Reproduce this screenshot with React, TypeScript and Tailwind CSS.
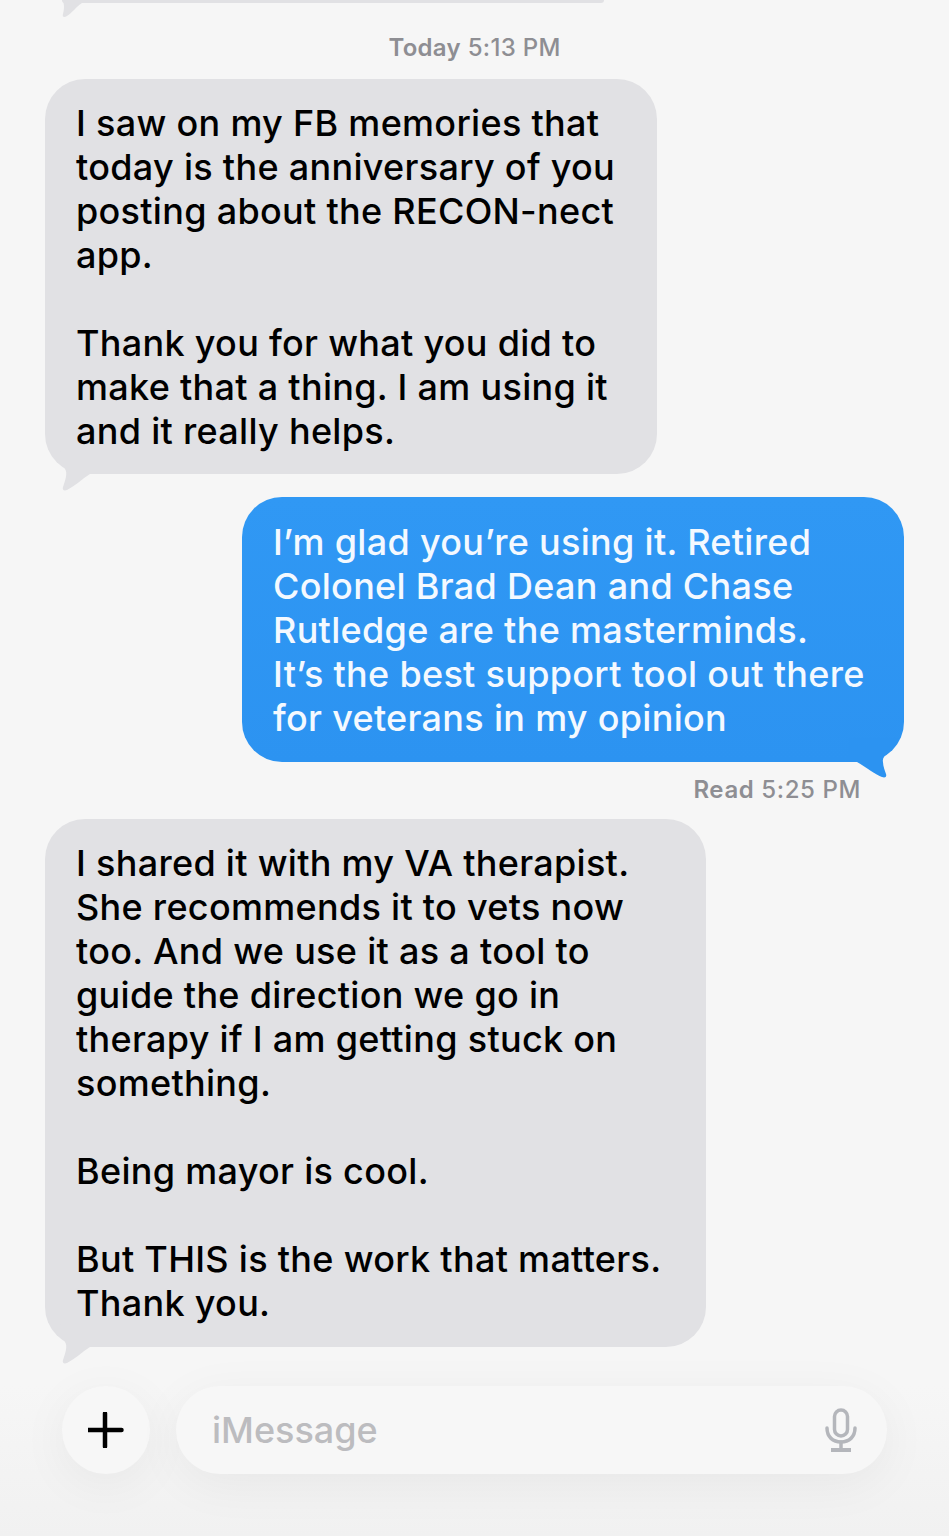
import React from "react";

const font = { fontFamily: "Inter, 'Liberation Sans', sans-serif" };

function TailLeft() {
  return (
    <svg
      className="absolute left-[15px] bottom-[-17px]"
      width="50"
      height="41"
      viewBox="0 0 50 41"
      fill="#e1e1e4"
    >
      <path d="M0 0 C1 8 1 14 5 19 C8 23 5 31 3 37 C2 40 4 41 7 40 C15 36 22 29 30 24 L50 24 L50 0 Z" />
    </svg>
  );
}

function TailRight() {
  return (
    <svg
      className="absolute right-[5px] bottom-[-16px]"
      width="50"
      height="40"
      viewBox="0 0 50 40"
      fill="#2c93f1"
    >
      <path d="M50 0 C48 6 44 10 40 14 C36 17 33 20 34 24 C34 28 36 33 37 36 C38 39 36 40 33 39 C27 37 17 29 8 24 L0 24 L0 0 Z" />
    </svg>
  );
}

function Incoming({ className, children }: { className: string; children: React.ReactNode }) {
  return (
    <div className={`relative ml-[45px] rounded-[40px] bg-[#e1e1e4] pl-[31px] pt-[22px] text-[36px] font-medium leading-[44px] tracking-[0.3px] text-black whitespace-nowrap ${className}`}>
      {children}
      <TailLeft />
    </div>
  );
}

export default function App() {
  return (
    <div className="flex h-[1536px] w-[949px] flex-col overflow-hidden bg-[#f6f6f6]" style={font}>
      <div className="flex-1">
        {/* end of the previous bubble, cut off by the top of the screen */}
        <div className="relative ml-[62px] h-[3px] w-[542px] rounded-b-[3px] bg-[#e1e1e4]">
          <svg className="absolute left-0 top-0" width="30" height="18" viewBox="0 0 30 18" fill="#e1e1e4">
            <path d="M0 0 C3 4 2 10 1 14 C0 17 2 18 5 16 C10 13 14 7 20 3 L30 3 L30 0 Z" />
          </svg>
        </div>

        <p className="mt-[31px] text-center text-[24px] font-medium leading-[28px] tracking-[0.3px] text-[#8e8e93]">
          <span className="font-semibold">Today</span> 5:13 PM
        </p>

        <div className="mt-[17px]">
          <Incoming className="w-[612px] pb-[21px]">
            I saw on my FB memories that
            <br />
            today is the anniversary of you
            <br />
            posting about the RECON-nect
            <br />
            app.
            <br />
            <br />
            Thank you for what you did to
            <br />
            make that a thing. I am using it
            <br />
            and it really helps.
          </Incoming>
        </div>

        <div className="relative ml-[242px] mt-[23px] w-[662px] rounded-[40px] bg-gradient-to-b from-[#3098f4] to-[#2c93f1] pb-[22px] pl-[31px] pt-[23px] text-[36px] font-medium leading-[44px] tracking-[0.3px] whitespace-nowrap text-[#f4f9ff]">
          I’m glad you’re using it. Retired
          <br />
          Colonel Brad Dean and Chase
          <br />
          Rutledge are the masterminds.
          <br />
          It’s the best support tool out there
          <br />
          for veterans in my opinion
          <TailRight />
        </div>

        <p className="mr-[88px] mt-[14px] text-right text-[24px] font-medium leading-[28px] tracking-[0.6px] text-[#8e8e93]">
          <span className="font-semibold">Read</span> 5:25 PM
        </p>

        <div className="mt-[15px]">
          <Incoming className="w-[661px] pb-[22px]">
            I shared it with my VA therapist.
            <br />
            She recommends it to vets now
            <br />
            too. And we use it as a tool to
            <br />
            guide the direction we go in
            <br />
            therapy if I am getting stuck on
            <br />
            something.
            <br />
            <br />
            Being mayor is cool.
            <br />
            <br />
            But THIS is the work that matters.
            <br />
            Thank you.
          </Incoming>
        </div>
      </div>

      <div className="flex items-start gap-[26px] bg-gradient-to-b from-[#f6f6f6] to-[#f1f1f1] pb-[62px] pl-[62px] pr-[62px]">
        <button className="flex h-[88px] w-[88px] items-center justify-center rounded-full bg-[#f7f7f7] shadow-[0_10px_50px_rgba(0,0,0,0.05)]">
          <svg width="36" height="36" viewBox="0 0 36 36" stroke="#000" strokeWidth="4.5" strokeLinecap="round">
            <path d="M17 1.5 V34.5 M0.5 18 H33.5" />
          </svg>
        </button>
        <div className="flex h-[88px] flex-1 items-center justify-between rounded-full bg-[#f7f7f7] pl-[36px] pr-[30px] shadow-[0_10px_50px_rgba(0,0,0,0.05)]">
          <span className="text-[36px] font-medium text-[#bcbcbf]">iMessage</span>
          <svg width="32" height="44" viewBox="0 0 32 44" fill="none" stroke="#b4b6bb" strokeWidth="3.5" strokeLinecap="round">
            <rect x="9.5" y="2" width="13" height="26" rx="6.5" />
            <path d="M2 20 C2 29 8 34 16 34 C24 34 30 29 30 20" />
            <path d="M16 34 V41" />
            <path d="M6 42 H26" strokeWidth="4" strokeLinecap="butt" />
          </svg>
        </div>
      </div>
    </div>
  );
}
